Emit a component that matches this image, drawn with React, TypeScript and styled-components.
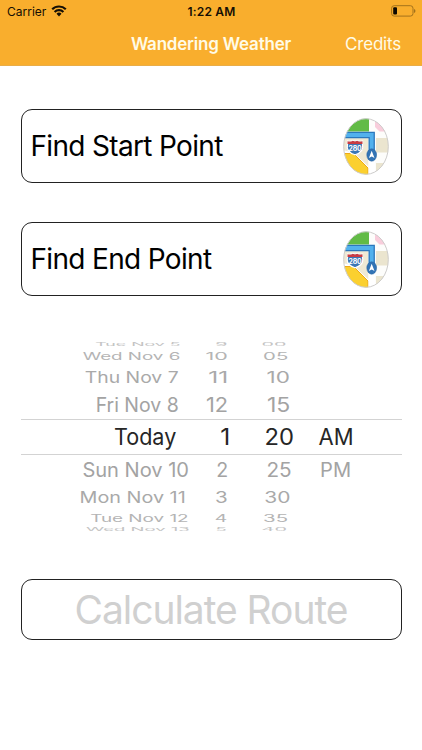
import React, { useLayoutEffect, useRef } from 'react';
import styled, { createGlobalStyle } from 'styled-components';

const GlobalStyle = createGlobalStyle`
  * { box-sizing: border-box; }
  body { margin: 0; background: #fff; }
`;

const Screen = styled.main`
  width: 422px;
  height: 750px;
  overflow: hidden;
  background: #fff;
  font-family: Inter, "Liberation Sans", sans-serif;
  color: #000;
`;

const Header = styled.header`
  height: 66px;
  background: #f9ae2d;
  border-bottom: 1px solid #e9ad48;
`;

const StatusBar = styled.div`
  height: 22px;
  display: grid;
  grid-template-columns: 1fr auto 1fr;
  align-items: center;
  padding: 0 6px 0 7px;
  font-size: 12px;
  color: #150f04;
`;

const Carrier = styled.div`
  display: flex;
  align-items: center;
  gap: 4.5px;
  letter-spacing: 0;
`;

const Clock = styled.div`
  font-weight: 600;
  font-size: 12px;
  letter-spacing: 0.2px;
`;

const BatterySlot = styled.div`
  display: flex;
  justify-content: flex-end;
`;

const NavBar = styled.nav`
  height: 43px;
  display: grid;
  grid-template-columns: 1fr auto 1fr;
  align-items: center;
  padding-right: 21px;
  padding-left: 21px;
  color: #fffbe6;
  font-size: 17px;
`;

const Title = styled.h1`
  grid-column: 2;
  margin: 0;
  font-size: 17px;
  font-weight: 600;
  letter-spacing: -0.2px;
`;

const NavLink = styled.span`
  justify-self: end;
  letter-spacing: -0.2px;
`;

const Content = styled.div`
  display: flex;
  flex-direction: column;
  padding: 43px 20.5px 0;
`;

const PointButton = styled.button`
  display: flex;
  align-items: center;
  justify-content: space-between;
  height: 74px;
  margin: 0 0 39px;
  padding: 0 11.5px 0 9px;
  border: 1.3px solid #222;
  border-radius: 11px;
  background: #fff;
  color: #000;
  font-family: inherit;
  font-size: 28px;
  letter-spacing: -0.67px;
`;

const CalculateButton = styled.button`
  height: 61px;
  margin-top: 47px;
  padding: 0;
  border: 1.3px solid #222;
  border-radius: 11px;
  background: #fff;
  color: #d0d0d0;
  font-family: inherit;
  font-size: 39px;
  letter-spacing: -1.05px;
`;

const Wheel = styled.div`
  position: relative;
  height: 191px;
  margin-top: 6px;
`;

const SelectionBand = styled.div`
  position: absolute;
  top: 78px;
  left: 0;
  right: 0;
  height: 36px;
  border-top: 1px solid #d3d3d3;
  border-bottom: 1px solid #d3d3d3;
`;

const WheelRow = styled.div<{ $height: number; $color: string }>`
  display: grid;
  grid-template-columns: 125px 57px 55px 50px;
  grid-template-rows: ${(p) => p.$height}px;
  padding-left: 59.5px;
  height: ${(p) => p.$height}px;
  align-items: center;
  color: ${(p) => p.$color};
`;

const Cell = styled.div<{ $squash: number }>`
  display: flex;
  align-items: center;
  height: ${(p) => 28 * p.$squash}px;
  font-size: 22.4px;
  line-height: 28px;
  white-space: nowrap;
`;

const Face = styled.span`
  display: block;
  transform-origin: 0 50%;
`;

const COLUMN_LEFT = [80, 205, 262, 317];

type Item = [text: string, from: number, to: number];

/* Projects a label of the drum onto the flat span [from, to]. */
function DrumLabel({ item, column, squash }: { item: Item; column: number; squash: number }) {
  const [text, from, to] = item;
  const ref = useRef<HTMLSpanElement>(null);
  useLayoutEffect(() => {
    const el = ref.current;
    const ctx = document.createElement('canvas').getContext('2d');
    if (!el || !ctx) return;
    ctx.font = '22.4px Inter, "Liberation Sans", sans-serif';
    const m = ctx.measureText(text);
    const sx = (to - from) / (m.actualBoundingBoxRight + m.actualBoundingBoxLeft);
    const dx = from - COLUMN_LEFT[column] + m.actualBoundingBoxLeft * sx;
    el.style.transform = `translateX(${dx}px) scale(${sx}, ${squash})`;
  }, [text, from, to, column, squash]);
  return <Face ref={ref}>{text}</Face>;
}

const rows: { h: number; squash: number; color: string; items: Item[] }[] = [
  { h: 6, squash: 0.2, color: '#c4c4c4', items: [['Tue Nov 5', 96, 180], ['9', 216, 226.5], ['00', 262.5, 285.5]] },
  { h: 18, squash: 0.47, color: '#b4b4b4', items: [['Wed Nov 6', 82.7, 179.5], ['10', 206.5, 226.7], ['05', 264, 287.7]] },
  { h: 23, squash: 0.69, color: '#a9a9a9', items: [['Thu Nov 7', 85.7, 178], ['11', 209.3, 227], ['10', 267.5, 288.7]] },
  { h: 33.4, squash: 0.88, color: '#a3a3a3', items: [['Fri Nov 8', 96.5, 178], ['12', 207, 227.5], ['15', 268, 289.7]] },
  { h: 31.6, squash: 1, color: '#262626', items: [['Today', 115, 175.7], ['1', 221.3, 229], ['20', 265.5, 292.7], ['AM', 318.5, 352.3]] },
  { h: 33.4, squash: 0.88, color: '#a3a3a3', items: [['Sun Nov 10', 83.3, 188], ['2', 217, 227.5], ['25', 267.3, 291], ['PM', 321, 350]] },
  { h: 22, squash: 0.7, color: '#a9a9a9', items: [['Mon Nov 11', 80.5, 184.7], ['3', 216, 227], ['30', 265.3, 289.5]] },
  { h: 19.2, squash: 0.46, color: '#b4b4b4', items: [['Tue Nov 12', 91, 188], ['4', 215.5, 226.7], ['35', 264, 287.5]] },
  { h: 3.8, squash: 0.2, color: '#c4c4c4', items: [['Wed Nov 13', 86, 189], ['5', 216.3, 226.3], ['40', 262.5, 286]] },
];

const WifiIcon = () => (
  <svg width="16" height="12" viewBox="0 0 16 12" fill="none" stroke="#150f04" strokeWidth="2.2">
    <path d="M1.200 4.300a9.700 9.700 0 0 1 13.600 0" />
    <path d="M3.600 7a6.300 6.300 0 0 1 8.800 0" />
    <path d="M8 11.400 5.500 8.800a3.600 3.600 0 0 1 5 0Z" fill="#150f04" stroke="none" />
  </svg>
);

const BatteryIcon = () => (
  <svg width="25" height="12" viewBox="0 0 25 12">
    <rect x=".6" y=".7" width="21.4" height="10.4" rx="2.6" fill="none" stroke="#a4731c" strokeWidth="1" />
    <rect x="2.2" y="2.3" width="3.8" height="7.2" rx="1" fill="#0d0800" />
    <path d="M23.200 4v4c1.600-.6 1.600-3.400 0-4Z" fill="#8d6318" />
  </svg>
);

const MapIcon = ({ id }: { id: string }) => (
  <svg width="46" height="57" viewBox="0 0 46 57">
    <clipPath id={id}>
      <ellipse cx="23" cy="28.500" rx="22.400" ry="27.900" />
    </clipPath>
    <g clipPath={`url(#${id})`}>
      <rect width="46" height="57" fill="#fdfdfb" />
      <path d="M0 0h26v13.500H0z" fill="#62bb46" />
      <path d="M32 0h14v13.500H36.500L32 9z" fill="#f8cddb" />
      <path d="M33 20h13v14.500H33z M33 45h13v12H33z" fill="#ebe5cf" />
      <path d="M0 20h25.500v37H0z" fill="#efe9d4" />
      <path d="M0 32 11 35l16 15v7H10L0 46z" fill="#fff" />
      <path d="M0 41l12 16H0z" fill="#ebe5cf" />
      <path d="M1 35.500h9.500L25 50v9h-8L1 43z" fill="#fbd02f" stroke="#eca91c" strokeWidth="1" />
      <path d="M25.500 14h6.500v43h-6.500z" fill="#fff" />
      <path d="M0 17h28.700V36" fill="none" stroke="#2b78bd" strokeWidth="6.400" />
      <path d="M0 17h28.700V36" fill="none" stroke="#52b1ed" strokeWidth="3.800" />
      <path d="M4.500 23c2 .7 4 .5 5.200-.5l2.300.8 2.300-.8c1.300 1 3.200 1.200 5.200.5v3.600c1.300 5.100-1.100 8.200-7.500 10.200-6.400-2-8.800-5.100-7.500-10.200z" fill="#3c76b5" stroke="#fff" strokeWidth="1.200" />
      <path d="M4.500 23.200c2 .7 4 .5 5.200-.5l2.300.8 2.300-.8c1.300 1 3.200 1.200 5.200.5v2.800h-15z" fill="#c93c42" />
      <text x="12" y="33" fontFamily="Inter, sans-serif" fontSize="6.900" fontWeight="700" letterSpacing="-.2" fill="#fff" textAnchor="middle">280</text>
      <ellipse cx="28.700" cy="37" rx="4.900" ry="6.200" fill="#3274b5" stroke="#2b65a1" strokeWidth=".5" />
      <path d="m28.700 32.800 2.800 7.300-2.800-1.700-2.800 1.700z" fill="#fff" />
    </g>
    <ellipse cx="23" cy="28.500" rx="22.300" ry="27.800" fill="none" stroke="#cdcccb" strokeWidth="1" />
  </svg>
);

export default function App() {
  return (
    <Screen>
      <GlobalStyle />
      <Header>
        <StatusBar>
          <Carrier>
            Carrier
            <WifiIcon />
          </Carrier>
          <Clock>1:22 AM</Clock>
          <BatterySlot>
            <BatteryIcon />
          </BatterySlot>
        </StatusBar>
        <NavBar>
          <Title>Wandering Weather</Title>
          <NavLink>Credits</NavLink>
        </NavBar>
      </Header>
      <Content>
        <PointButton>
          Find Start Point
          <MapIcon id="start-map" />
        </PointButton>
        <PointButton>
          Find End Point
          <MapIcon id="end-map" />
        </PointButton>
        <Wheel>
          <SelectionBand />
          {rows.map((row, i) => (
            <WheelRow key={i} $height={row.h} $color={row.color}>
              {row.items.map((item, column) => (
                <Cell key={column} $squash={row.squash}>
                  <DrumLabel item={item} column={column} squash={row.squash} />
                </Cell>
              ))}
            </WheelRow>
          ))}
        </Wheel>
        <CalculateButton>Calculate Route</CalculateButton>
      </Content>
    </Screen>
  );
}
